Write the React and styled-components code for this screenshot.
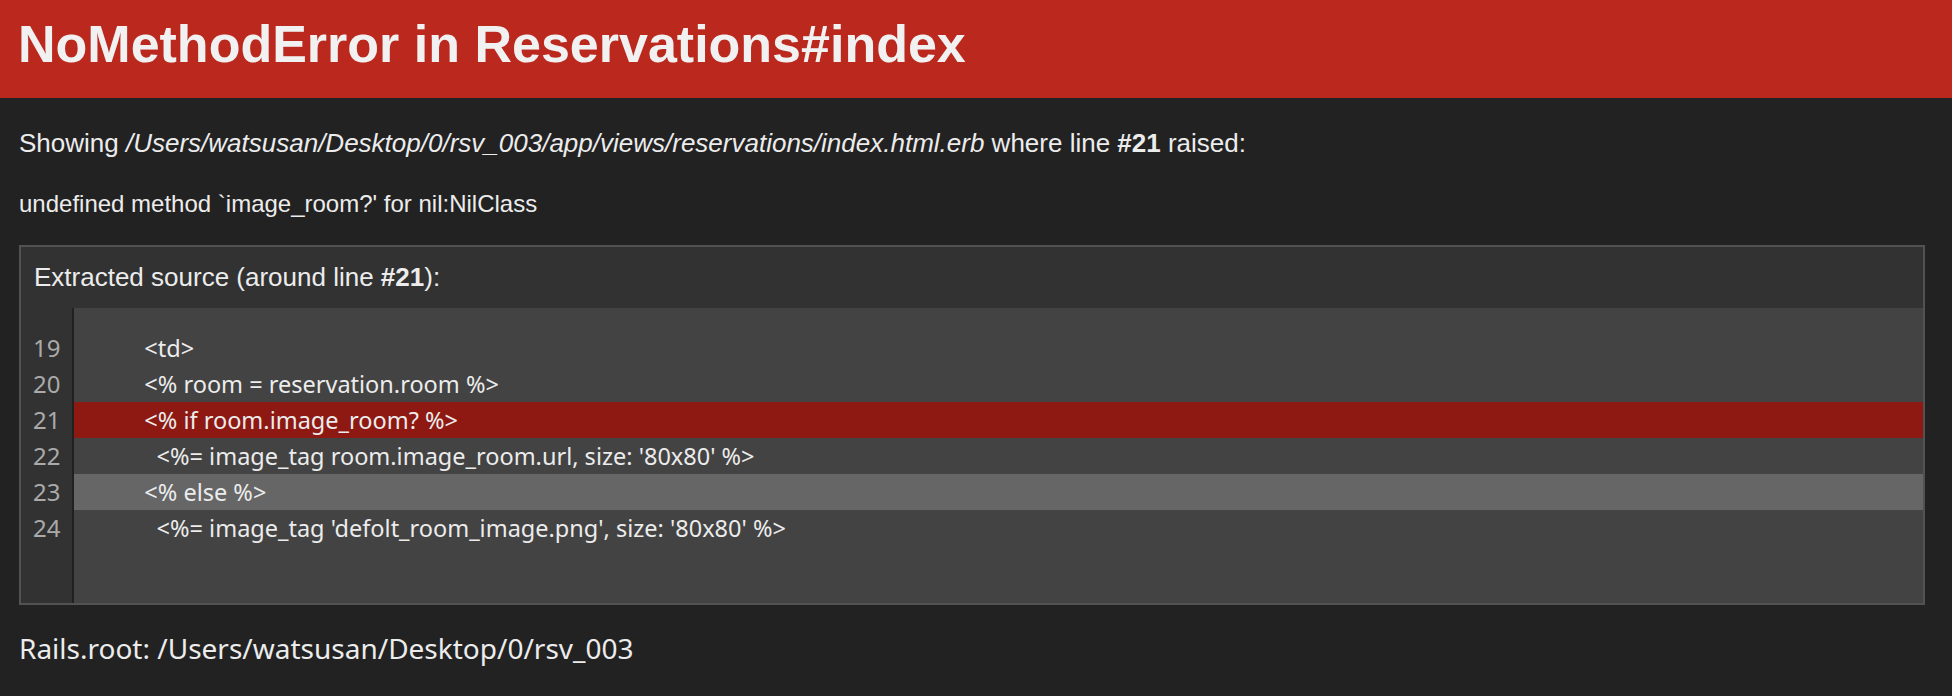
import React from "react";
import styled, { createGlobalStyle } from "styled-components";

const GlobalStyle = createGlobalStyle`
  html, body {
    margin: 0;
    padding: 0;
    background-color: #222222;
  }
  body {
    color: #ececec;
    font-family: "Liberation Sans", Arial, Helvetica, sans-serif;
  }
`;

const Page = styled.div`
  min-height: 696px;
  background-color: #222222;
`;

const Header = styled.header`
  background-color: #bb281d;
  color: #f1f1f1;
  padding: 16px 18px 25px;
`;

const Title = styled.h1`
  margin: 0;
  font-size: 52px;
  line-height: 57px;
  font-weight: bold;
  white-space: nowrap;
`;

const Container = styled.div`
  padding: 30px 27px 0 19px;
`;

const Intro = styled.p`
  margin: 0;
  font-size: 26px;
  line-height: 30px;
  white-space: nowrap;
`;

const Message = styled.pre`
  margin: 31px 0 0;
  font-family: "Liberation Sans", Arial, sans-serif;
  font-size: 24px;
  line-height: 30px;
`;

const SourceBox = styled.div`
  margin-top: 26px;
  border: 2px solid #525252;
  background-color: #323232;
`;

const Summary = styled.div`
  padding: 15px 13px 16px;
  font-size: 26px;
  line-height: 30px;
`;

const Data = styled.div`
  display: flex;
  background-color: #434343;
`;

const LineNumbers = styled.pre`
  margin: 0;
  padding: 22px 12px 57px;
  background-color: #323232;
  border-right: 2px solid #212121;
  color: #aaaaaa;
  font-family: "Noto Sans", "Open Sans", sans-serif;
  font-size: 24px;
  line-height: 36px;
  text-align: right;
`;

const Code = styled.pre`
  flex: 1;
  margin: 0;
  padding: 22px 0 57px;
  font-family: "Noto Sans", "Open Sans", sans-serif;
  font-size: 23.5px;
  line-height: 36px;
  color: #ececec;
`;

const Line = styled.div`
  height: 36px;
  padding-left: 21px;
  white-space: pre;
  background-color: ${(p) =>
    p.$state === "active" ? "#8e1912" : p.$state === "hover" ? "#666666" : "transparent"};
`;

const RootPath = styled.p`
  margin: 25px 0 0;
  font-family: "Noto Sans", "Open Sans", sans-serif;
  font-size: 28px;
  line-height: 36px;
  white-space: nowrap;
`;

const lines = [
  { n: 19, text: "        <td>" },
  { n: 20, text: "        <% room = reservation.room %>" },
  { n: 21, text: "        <% if room.image_room? %>", state: "active" },
  { n: 22, text: "          <%= image_tag room.image_room.url, size: '80x80' %>" },
  { n: 23, text: "        <% else %>", state: "hover" },
  { n: 24, text: "          <%= image_tag 'defolt_room_image.png', size: '80x80' %>" },
];

export default function App() {
  return (
    <Page>
      <GlobalStyle />
      <Header>
        <Title>NoMethodError in Reservations#index</Title>
      </Header>
      <Container>
        <Intro>
          Showing <i>/Users/watsusan/Desktop/0/rsv_003/app/views/reservations/index.html.erb</i> where line{" "}
          <b>#21</b> raised:
        </Intro>
        <Message>undefined method `image_room?' for nil:NilClass</Message>
        <SourceBox>
          <Summary>
            Extracted source (around line <b>#21</b>):
          </Summary>
          <Data>
            <LineNumbers>
              {lines.map((l) => (
                <div key={l.n}>{l.n}</div>
              ))}
            </LineNumbers>
            <Code>
              {lines.map((l) => (
                <Line key={l.n} $state={l.state}>
                  {l.text}
                </Line>
              ))}
            </Code>
          </Data>
        </SourceBox>
        <RootPath>Rails.root: /Users/watsusan/Desktop/0/rsv_003</RootPath>
      </Container>
    </Page>
  );
}
